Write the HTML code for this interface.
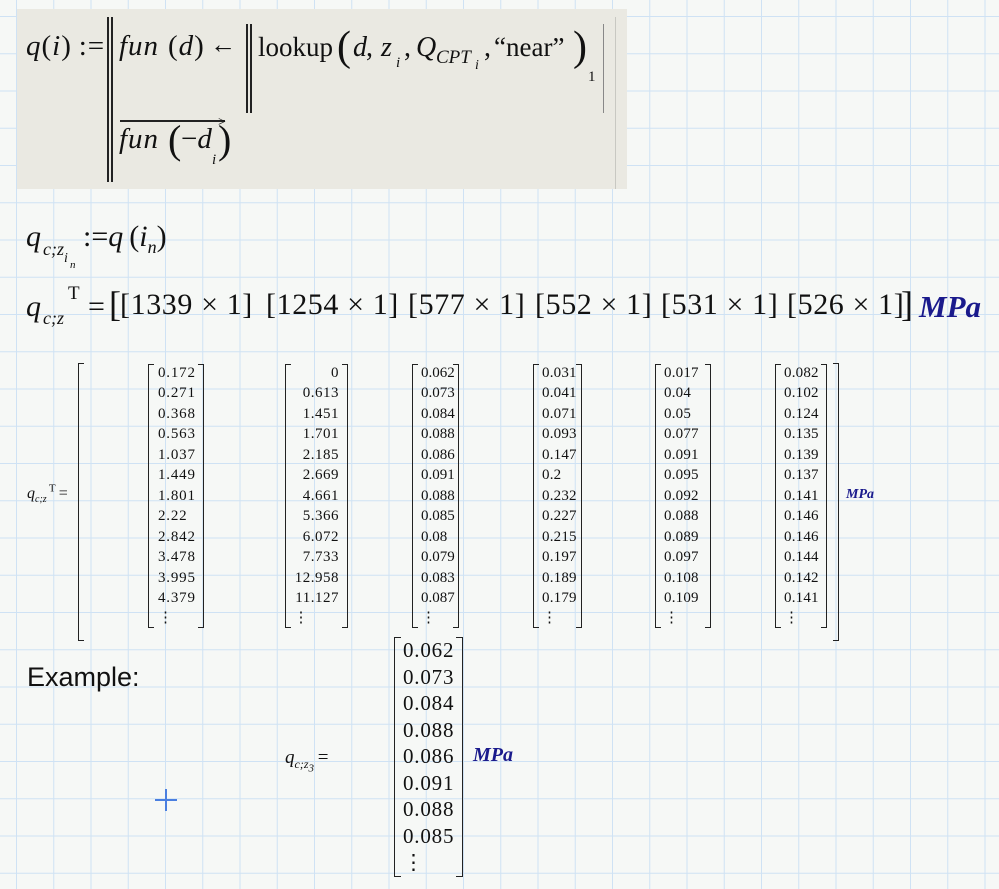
<!DOCTYPE html>
<html><head><meta charset="utf-8"><style>
body{margin:0;width:999px;height:889px;overflow:hidden;position:relative;background-color:#f6f8f6;
background-image:linear-gradient(to right,#cfe2f4 1px,transparent 1px),linear-gradient(to bottom,#cfe2f4 1px,transparent 1px);
background-size:37.25px 37.25px;background-position:16px 16px;font-family:"Liberation Serif",serif;color:#111}
.a{position:absolute;white-space:nowrap;line-height:1}
.i{font-style:italic}
.box{position:absolute;left:17px;top:9px;width:610px;height:180px;background:#eae9e2}
.v{position:absolute;background:#222;width:1.5px}
.bl,.br{position:absolute;border:1.5px solid #222;width:5px}
.bl{border-right:none}.br{border-left:none}
.col{position:absolute;font-size:15px;line-height:20.45px;letter-spacing:0.2px}
.mpa{color:#1a1a8c;font-weight:bold;font-style:italic}
sub,sup{line-height:0}
.r3{position:absolute;top:290px;font-size:30px;line-height:1;white-space:nowrap;letter-spacing:0.6px}
</style></head><body>
<div class="box"></div>
<div class="v" style="left:615px;top:17px;height:172px;background:#c8c8c2;width:1px"></div>
<div class="a" style="left:26px;top:32px;font-size:29px;letter-spacing:1px"><span class="i">q</span>(<span class="i">i</span>)&thinsp;:=</div>
<div class="v" style="left:107px;top:17px;height:165px"></div>
<div class="v" style="left:111px;top:17px;height:165px"></div>
<div class="a i" style="left:119px;top:32px;font-size:29px;letter-spacing:1px">fun</div>
<div class="a" style="left:168px;top:32px;font-size:29px;letter-spacing:1px">(<span class="i">d</span>)</div>
<div class="a" style="left:210px;top:32px;font-size:26px">←</div>
<div class="v" style="left:246px;top:24px;height:89px"></div>
<div class="v" style="left:250px;top:24px;height:89px"></div>
<div class="a" style="left:258px;top:34px;font-size:27px">lookup</div>
<div class="a" style="left:337px;top:26px;font-size:42px">(</div>
<div class="a i" style="left:353px;top:34px;font-size:28px">d</div>
<div class="a" style="left:366px;top:34px;font-size:28px">,</div>
<div class="a i" style="left:381px;top:34px;font-size:28px">z</div>
<div class="a i" style="left:396px;top:56px;font-size:15px">i</div>
<div class="a" style="left:404px;top:34px;font-size:28px">,</div>
<div class="a i" style="left:416px;top:34px;font-size:28px">Q</div>
<div class="a i" style="left:436px;top:48px;font-size:19px">CPT</div>
<div class="a i" style="left:475px;top:59px;font-size:14px">i</div>
<div class="a" style="left:484px;top:34px;font-size:28px">,</div>
<div class="a" style="left:494px;top:34px;font-size:27px">“near”</div>
<div class="a" style="left:573px;top:26px;font-size:42px">)</div>
<div class="a" style="left:588px;top:70px;font-size:15px">1</div>
<div class="v" style="left:603px;top:24px;height:89px;background:#888;width:1px"></div>
<div class="a" style="left:120px;top:120px;width:105px;height:1.5px;background:#222"></div>
<div class="a" style="left:218px;top:116px;font-size:14px">&gt;</div>
<div class="a i" style="left:119px;top:125px;font-size:29px;letter-spacing:1px">fun</div>
<div class="a" style="left:168px;top:120px;font-size:40px">(</div>
<div class="a" style="left:181px;top:125px;font-size:29px">−<span class="i">d</span></div>
<div class="a i" style="left:212px;top:153px;font-size:15px">i</div>
<div class="a" style="left:218px;top:120px;font-size:40px">)</div>

<div class="a i" style="left:26px;top:222px;font-size:30px">q</div>
<div class="a i" style="left:43px;top:240px;font-size:18px">c;z</div>
<div class="a i" style="left:64px;top:252px;font-size:14px">i</div>
<div class="a i" style="left:70px;top:260px;font-size:11px">n</div>
<div class="a" style="left:83px;top:222px;font-size:30px">:=<span class="i">q</span>&thinsp;(<span class="i">i<sub style="font-size:18px">n</sub></span>)</div>

<div class="a i" style="left:26px;top:292px;font-size:30px">q</div>
<div class="a i" style="left:43px;top:309px;font-size:18px">c;z</div>
<div class="a" style="left:68px;top:284px;font-size:19px">T</div>
<div class="a" style="left:88px;top:292px;font-size:30px">=</div>
<div class="r3" style="left:109px;font-size:36px;top:286px">[</div>
<div class="r3" style="left:120px">[1339 × 1]</div>
<div class="r3" style="left:266px">[1254 × 1]</div>
<div class="r3" style="left:408px">[577 × 1]</div>
<div class="r3" style="left:535px">[552 × 1]</div>
<div class="r3" style="left:661px">[531 × 1]</div>
<div class="r3" style="left:787px">[526 × 1]</div>
<div class="r3" style="left:901px;font-size:36px;top:286px">]</div>
<div class="a mpa" style="left:919px;top:291px;font-size:31px">MPa</div>

<div class="a" style="left:27px;top:486px;font-size:16px"><span class="i">q</span><sub class="i" style="font-size:10px">c;z</sub><sup style="font-size:11px">&thinsp;T</sup>&thinsp;=</div>
<div class="bl" style="left:78px;top:363px;height:276px"></div>
<div class="br" style="left:833px;top:363px;height:276px"></div>
<div class="a mpa" style="left:846px;top:488px;font-size:14px">MPa</div>

<div class="bl" style="left:148px;top:364px;height:262px"></div><div class="br" style="left:198px;top:364px;height:262px"></div>
<div class="col" style="left:158px;top:363px;letter-spacing:0.8px">0.172<br>0.271<br>0.368<br>0.563<br>1.037<br>1.449<br>1.801<br>2.22<br>2.842<br>3.478<br>3.995<br>4.379<br>⋮</div>
<div class="bl" style="left:285px;top:364px;height:262px"></div><div class="br" style="left:342px;top:364px;height:262px"></div>
<div class="col" style="left:288px;top:363px;width:51px;text-align:right;letter-spacing:0.5px">0<br>0.613<br>1.451<br>1.701<br>2.185<br>2.669<br>4.661<br>5.366<br>6.072<br>7.733<br>12.958<br>11.127<br><span style="padding-right:30px">⋮</span></div>
<div class="bl" style="left:412px;top:364px;height:262px"></div><div class="br" style="left:453px;top:364px;height:262px"></div>
<div class="col" style="left:421px;top:363px;letter-spacing:0">0.062<br>0.073<br>0.084<br>0.088<br>0.086<br>0.091<br>0.088<br>0.085<br>0.08<br>0.079<br>0.083<br>0.087<br>⋮</div>
<div class="bl" style="left:533px;top:364px;height:262px"></div><div class="br" style="left:576px;top:364px;height:262px"></div>
<div class="col" style="left:542px;top:363px">0.031<br>0.041<br>0.071<br>0.093<br>0.147<br>0.2<br>0.232<br>0.227<br>0.215<br>0.197<br>0.189<br>0.179<br>⋮</div>
<div class="bl" style="left:655px;top:364px;height:262px"></div><div class="br" style="left:705px;top:364px;height:262px"></div>
<div class="col" style="left:664px;top:363px">0.017<br>0.04<br>0.05<br>0.077<br>0.091<br>0.095<br>0.092<br>0.088<br>0.089<br>0.097<br>0.108<br>0.109<br>⋮</div>
<div class="bl" style="left:775px;top:364px;height:262px"></div><div class="br" style="left:821px;top:364px;height:262px"></div>
<div class="col" style="left:784px;top:363px">0.082<br>0.102<br>0.124<br>0.135<br>0.139<br>0.137<br>0.141<br>0.146<br>0.146<br>0.144<br>0.142<br>0.141<br>⋮</div>

<div class="a" style="left:27px;top:664px;font-size:27px;font-family:'Liberation Sans',sans-serif">Example:</div>

<div class="a" style="left:285px;top:748px;font-size:19px"><span class="i">q</span><sub class="i" style="font-size:12px">c;z<sub style="font-size:11px">3</sub></sub>&thinsp;=</div>
<div class="bl" style="left:394px;top:637px;height:238px;width:6px"></div>
<div class="br" style="left:456px;top:637px;height:238px;width:6px"></div>
<div class="col" style="left:403px;top:637px;font-size:21px;line-height:26.5px;letter-spacing:0.8px">0.062<br>0.073<br>0.084<br>0.088<br>0.086<br>0.091<br>0.088<br>0.085<br>⋮</div>
<div class="a mpa" style="left:473px;top:745px;font-size:20px">MPa</div>

<div class="a" style="left:155px;top:799px;width:22px;height:1.5px;background:#4a7fe0"></div>
<div class="a" style="left:165px;top:789px;width:1.5px;height:22px;background:#4a7fe0"></div>
</body></html>
